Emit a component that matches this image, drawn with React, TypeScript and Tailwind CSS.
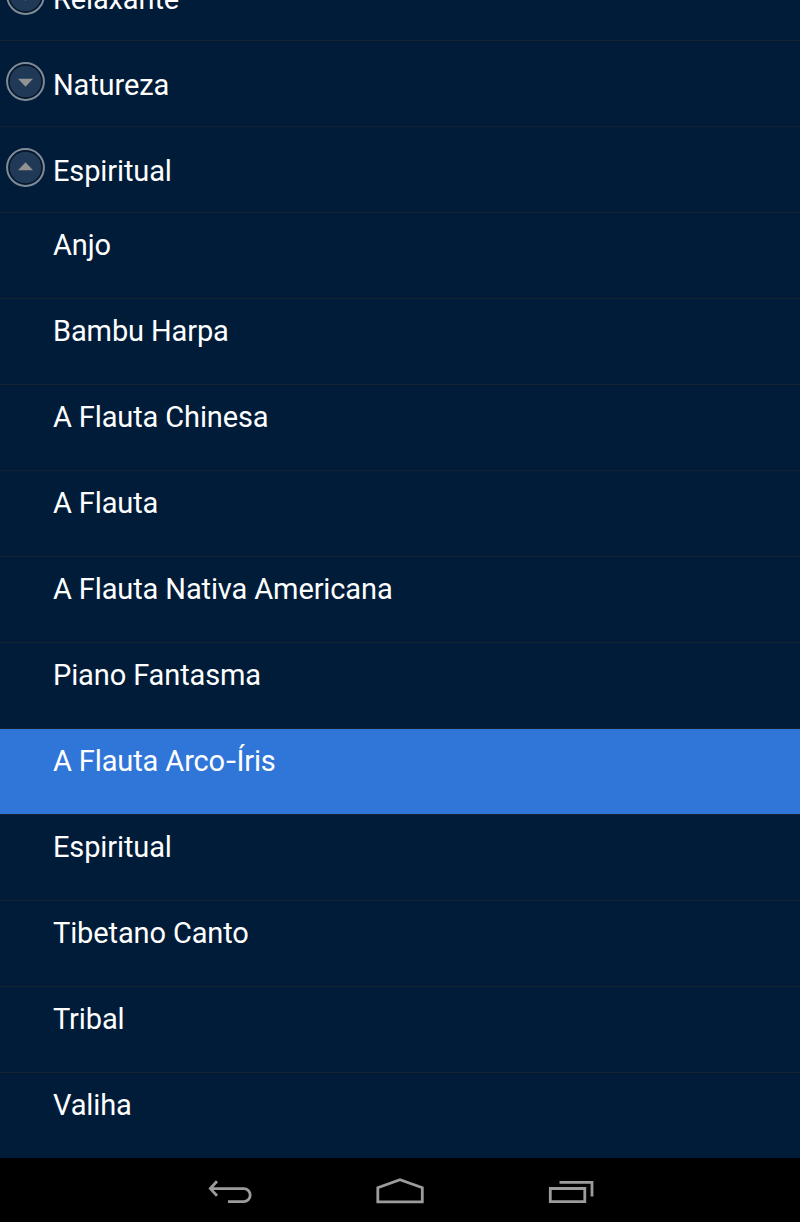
import React from "react";

interface Group {
  name: string;
  expanded: boolean;
  tracks: string[];
}

const groups: Group[] = [
  { name: "Relaxante", expanded: false, tracks: [] },
  { name: "Natureza", expanded: false, tracks: [] },
  {
    name: "Espiritual",
    expanded: true,
    tracks: [
      "Anjo",
      "Bambu Harpa",
      "A Flauta Chinesa",
      "A Flauta",
      "A Flauta Nativa Americana",
      "Piano Fantasma",
      "A Flauta Arco-Íris",
      "Espiritual",
      "Tibetano Canto",
      "Tribal",
      "Valiha",
    ],
  },
];

const selectedTrack = "A Flauta Arco-Íris";

// Round expand / collapse indicator
const Indicator: React.FC<{ expanded: boolean }> = ({ expanded }) => (
  <svg className="block shrink-0" width="40" height="40" viewBox="-0.5 -0.5 40 40">
    <circle cx="20" cy="20" r="18.4" fill="#03152b" stroke="#7f8b97" strokeWidth="2" />
    <circle cx="20" cy="20" r="15.8" fill="#1f3956" />
    <path d={expanded ? "M12.5 22.8 20 14.8l7.5 8z" : "M12.5 17.2h15L20 25.2z"} fill="#929292" />
  </svg>
);

const GroupRow: React.FC<{ group: Group }> = ({ group }) => (
  <div className="flex h-[86px] shrink-0 items-start border-b border-[#14232f] pl-[5px]">
    <div className="pt-5">
      <Indicator expanded={group.expanded} />
    </div>
    <span className="pl-2 pt-[26px] leading-9">{group.name}</span>
  </div>
);

// The hyphen is drawn a little wider than the font's own
const TrackName: React.FC<{ name: string }> = ({ name }) => (
  <>
    {name.split("-").map((part, i) => (
      <React.Fragment key={i}>
        {i > 0 && <span className="ml-[1.5px] mr-[2px] inline-block scale-x-125">-</span>}
        {part}
      </React.Fragment>
    ))}
  </>
);

const TrackRow: React.FC<{ name: string; selected: boolean }> = ({ name, selected }) => (
  <div className="h-[86px] shrink-0 border-b border-[#14232f]">
    <div className={`h-[85px] pl-[53px] pt-[14px] leading-9 ${selected ? "bg-[#3076d8]" : ""}`}>
      <TrackName name={name} />
    </div>
  </div>
);

// System navigation bar
const NavBar: React.FC = () => (
  <div className="flex h-16 shrink-0 bg-black pl-[200px]">
    <svg className="mr-[95px]" width="70" height="64" viewBox="200 1158 70 64" fill="none" stroke="#9c9c9c" strokeWidth="2.8">
      <path d="M217 1181.2 210.3 1188.6l6.7 7.2M210.5 1188.6h33.2a6.4 6.4 0 0 1 0 13H228" />
    </svg>
    <svg className="mr-[100px]" width="70" height="64" viewBox="365 1158 70 64" fill="none" stroke="#9c9c9c" strokeWidth="2.8">
      <path d="M377.8 1201.8v-14l22.2-8 22.3 8v14z" />
    </svg>
    <svg width="70" height="64" viewBox="535 1158 70 64" fill="none" stroke="#9c9c9c" strokeWidth="2.8">
      <path d="M550.3 1188.5h34.5v13.2h-34.5zM559.5 1182.3h32.5V1196.5" />
    </svg>
  </div>
);

const App: React.FC = () => {
  return (
    <div className="flex h-[1222px] w-[800px] flex-col overflow-hidden bg-[#001c38] font-['Roboto',sans-serif] text-[29px] tracking-[-0.12px] text-white">
      {/* Scrolled list */}
      <div className="flex h-[1158px] shrink-0 flex-col overflow-hidden">
        <div className="-mt-[45px] flex flex-col">
          {groups.map((group, i) => (
            <React.Fragment key={i}>
              <GroupRow group={group} />
              {group.tracks.map((track) => (
                <TrackRow key={track} name={track} selected={track === selectedTrack} />
              ))}
            </React.Fragment>
          ))}
        </div>
      </div>
      <NavBar />
    </div>
  );
};

export default App;
